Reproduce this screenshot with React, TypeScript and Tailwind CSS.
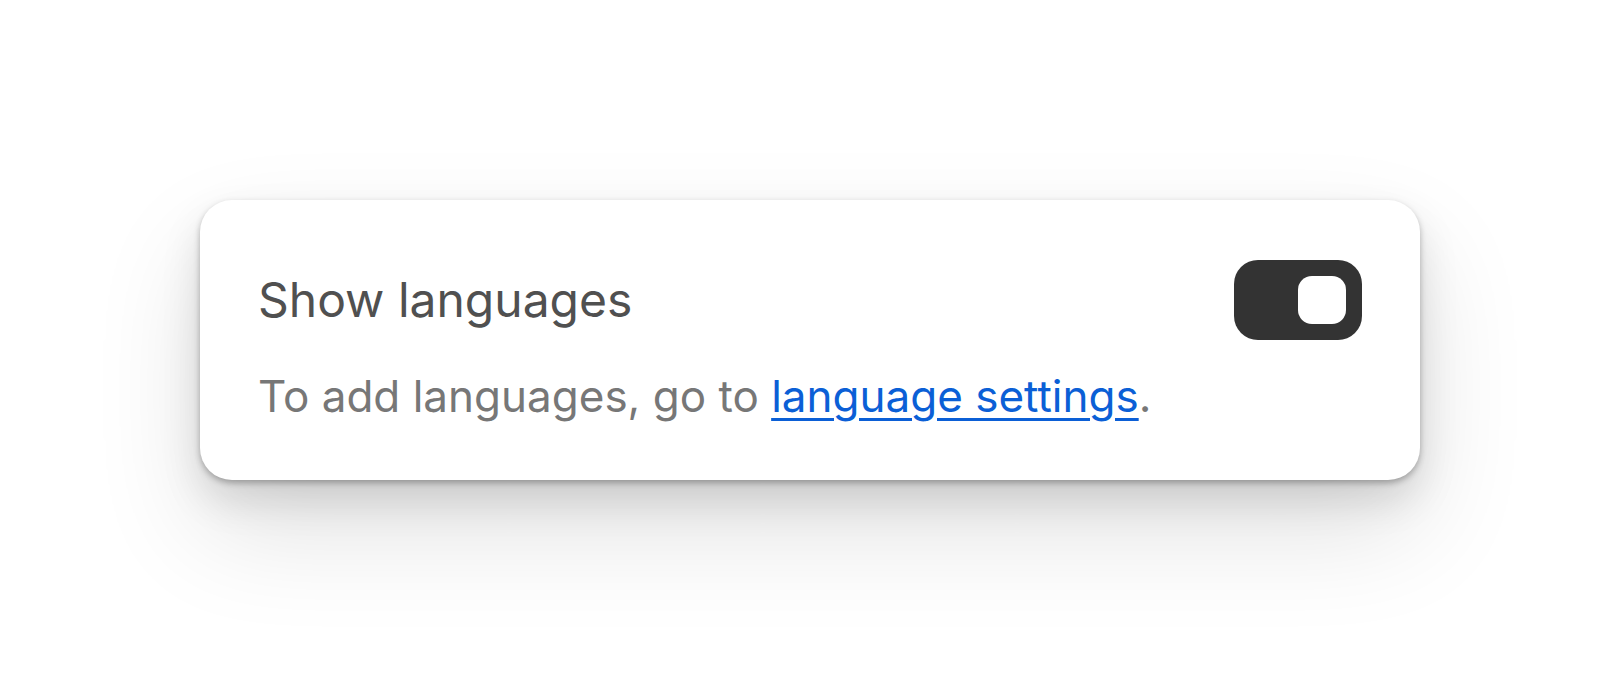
export default function App() {
  return (
    <div className="min-h-screen bg-white flex items-center justify-center font-['Inter',sans-serif]">
      <div className="w-[1220px] h-[280px] rounded-[32px] bg-white px-[58px] pt-[60px] shadow-[0_3px_6px_rgba(0,0,0,0.28),0_20px_40px_rgba(0,0,0,0.12),0_50px_110px_rgba(0,0,0,0.12)]">
        <div className="flex items-center justify-between h-[80px]">
          <span className="text-[48px] text-[#505050] leading-none">Show languages</span>
          <button className="w-[128px] h-[80px] rounded-[24px] bg-[#333333] flex items-center justify-end p-4">
            <span className="w-12 h-12 rounded-[14px] bg-white" />
          </button>
        </div>
        <p className="mt-[34px] text-[44px] leading-none text-[#777777]">
          To add languages, go to{" "}
          <a href="#" className="text-[#0b5fd6] underline underline-offset-[6px] decoration-[3px]">
            language settings
          </a>
          .
        </p>
      </div>
    </div>
  );
}
